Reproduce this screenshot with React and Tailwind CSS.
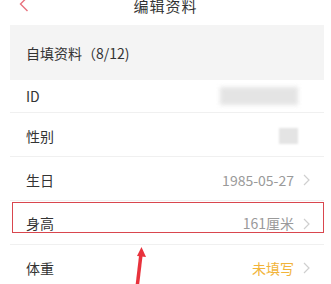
import React from 'react'

const font = { fontFamily: '"Noto Sans CJK SC", "Noto Sans", sans-serif' }

function Chevron() {
  return (
    <svg width="7" height="12" viewBox="0 0 7 12" className="ml-[9px] shrink-0">
      <path d="M1 1 L6 6 L1 11" fill="none" stroke="#cfcfcf" strokeWidth="1.2" />
    </svg>
  )
}

function Row({ label, height = 'h-[44px]', offset = 'mt-[3px]', children, border = true }) {
  return (
    <div className={`flex items-center justify-between pl-[16px] pr-[14px] ${height} ${border ? 'border-b border-[#f0f0f0]' : ''}`}>
      <span className={`text-[14px] text-[#333] ${offset}`}>{label}</span>
      <div className={`flex items-center ${offset}`}>{children}</div>
    </div>
  )
}

export default function App() {
  return (
    <div className="relative w-[331px] h-[284px] overflow-hidden bg-white" style={font}>
      {/* header */}
      <div className="relative h-[25px]">
        <svg width="10" height="16" viewBox="0 0 10 16" className="absolute left-[19px] top-[-4px]">
          <path d="M8.5 1 L1.5 8 L8.5 15" fill="none" stroke="#e8727e" strokeWidth="1.4" />
        </svg>
        <div className="flex h-[12px] items-center justify-center">
          <span className="text-[15px] text-[#333] tracking-[1px]">编辑资料</span>
        </div>
      </div>

      <div className="mx-[10px] mr-[7px]">
        <div className="h-[55px] bg-[#f4f4f4] flex items-center pl-[16px]">
          <span className="text-[14px] text-[#333] mt-[2px]">自填资料（8/12)</span>
        </div>

        <Row label="ID" height="h-[33px]" offset="mt-0">
          <div className="w-[78px] h-[18px] bg-[#dedede] blur-[2px] opacity-80 mr-[12px]" />
        </Row>
        <Row label="性别">
          <div className="w-[19px] h-[16px] bg-[#e4e4e4] blur-[1px] mr-[12px]" />
        </Row>
        <Row label="生日">
          <span className="text-[14px] text-[#9a9a9a]">1985-05-27</span>
          <Chevron />
        </Row>
        <Row label="身高" offset="mt-[2px]">
          <span className="text-[14px] text-[#9a9a9a]">161厘米</span>
          <Chevron />
        </Row>
        <Row label="体重" border={false} offset="mt-[2px]">
          <span className="text-[14px] text-[#f2b43a]">未填写</span>
          <Chevron />
        </Row>
      </div>

      {/* annotation box */}
      <div className="absolute left-[12px] top-[202px] w-[312px] h-[31px] border-[1.5px] border-[#d9464e]" />
      {/* annotation arrow */}
      <svg width="20" height="44" viewBox="0 0 20 44" className="absolute left-[131px] top-[244px]">
        <path d="M6 44 L10 10" stroke="#e8323c" strokeWidth="3.5" fill="none" />
        <path d="M10.5 3 L15 13 L6 12 Z" fill="#e8323c" />
      </svg>
    </div>
  )
}
